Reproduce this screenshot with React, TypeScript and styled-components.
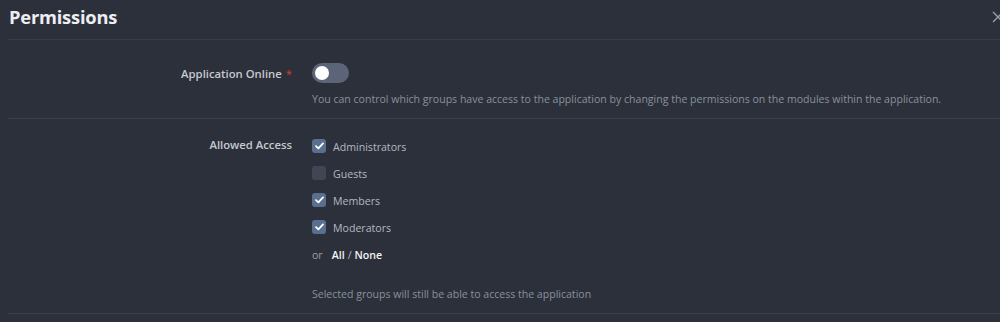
import React, { useState } from "react";
import styled, { createGlobalStyle } from "styled-components";

const GlobalStyle = createGlobalStyle`
  html, body {
    margin: 0;
    background: #2c303a;
  }
  body {
    font-family: "Open Sans", "Noto Sans", "Liberation Sans", sans-serif;
    -webkit-font-smoothing: antialiased;
  }
`;

const Panel = styled.div`
  width: 1000px;
  height: 322px;
  overflow: hidden;
  background: #2c303a;
  padding-left: 8px;
  box-sizing: border-box;
`;

const Header = styled.div`
  display: flex;
  align-items: center;
  justify-content: space-between;
  height: 39px;
  border-bottom: 1px solid #383c48;
`;

const Title = styled.h2`
  margin: 0 0 0 1px;
  font-size: 18.3px;
  font-weight: 700;
  color: #eceef2;
  letter-spacing: -0.2px;
  line-height: 1;
  padding-bottom: 4px;
`;

const Close = styled.button`
  border: 0;
  background: none;
  padding: 0;
  margin-right: -4px;
  margin-bottom: 6px;
  color: #9aa0ad;
  display: flex;
  cursor: pointer;
`;

const Row = styled.div<{ $pt: number; $pb: number }>`
  display: grid;
  grid-template-columns: 284px 1fr;
  column-gap: 20px;
  padding: ${(p) => p.$pt}px 0 ${(p) => p.$pb}px;
  border-bottom: 1px solid #3a3e4a;
`;

const Label = styled.div<{ $mt: number }>`
  text-align: right;
  font-size: 11.3px;
  font-weight: 600;
  color: #c5c8cf;
  margin-top: ${(p) => p.$mt}px;
  line-height: 16px;
`;

const Required = styled.span`
  color: #c0392b;
  margin-left: 4px;
`;

const Field = styled.div`
  display: flex;
  flex-direction: column;
  align-items: flex-start;
`;

const Track = styled.button<{ $on: boolean }>`
  position: relative;
  width: 37px;
  height: 20px;
  border: 0;
  padding: 0;
  border-radius: 10px;
  background: ${(p) => (p.$on ? "#5b7bb0" : "#5c6478")};
  cursor: pointer;
`;

const Knob = styled.span<{ $on: boolean }>`
  position: absolute;
  top: 3px;
  left: ${(p) => (p.$on ? "20px" : "3px")};
  width: 14px;
  height: 14px;
  border-radius: 50%;
  background: #ffffff;
`;

const Help = styled.div<{ $mt: number }>`
  margin-top: ${(p) => p.$mt}px;
  font-size: 10.55px;
  color: #8a909c;
  line-height: 16px;
`;

const CheckList = styled.div`
  display: flex;
  flex-direction: column;
  gap: 11px;
`;

const CheckRow = styled.label`
  display: flex;
  align-items: center;
  gap: 7px;
  font-size: 10.6px;
  color: #b4b8c1;
  line-height: 16px;
  cursor: pointer;
`;

const Box = styled.span<{ $checked: boolean }>`
  width: 14px;
  height: 14px;
  border-radius: 3px;
  background: ${(p) => (p.$checked ? "#5a6f8f" : "#424654")};
  display: flex;
  align-items: center;
  justify-content: center;
  margin-top: -2px;
`;

const Toggles = styled.div`
  display: flex;
  align-items: center;
  gap: 9px;
  font-size: 10.6px;
  line-height: 16px;
  color: #9aa0ab;
  margin-top: 11px;
`;

const LinkText = styled.span`
  color: #f2f3f5;
  font-weight: 600;
`;

const Slash = styled.span`
  color: #b8bcc5;
  font-weight: 400;
  margin: 0 3px;
`;

const groups = [
  { name: "Administrators", checked: true },
  { name: "Guests", checked: false },
  { name: "Members", checked: true },
  { name: "Moderators", checked: true },
];

const Check = () => (
  <svg width="9" height="8" viewBox="0 0 9 8">
    <path d="M1 4.2 L3.4 6.4 L8 1.4" fill="none" stroke="#fff" strokeWidth="1.8" strokeLinecap="round" strokeLinejoin="round" />
  </svg>
);

export default function App() {
  const [online, setOnline] = useState(false);
  return (
    <>
      <GlobalStyle />
      <Panel>
        <Header>
          <Title>Permissions</Title>
          <Close aria-label="Close">
            <svg width="12" height="12" viewBox="0 0 12 12">
              <path d="M1 1 L11 11 M11 1 L1 11" stroke="currentColor" strokeWidth="1.3" />
            </svg>
          </Close>
        </Header>

        <Row $pt={23} $pb={11}>
          <Label $mt={3}>
            Application Online<Required>*</Required>
          </Label>
          <Field>
            <Track $on={online} onClick={() => setOnline(!online)}>
              <Knob $on={online} />
            </Track>
            <Help $mt={8}>
              You can control which groups have access to the application by changing the permissions on the modules
              within the application.
            </Help>
          </Field>
        </Row>

        <Row $pt={20} $pb={11}>
          <Label $mt={-2}>Allowed Access</Label>
          <Field>
            <CheckList>
              {groups.map((g) => (
                <CheckRow key={g.name}>
                  <Box $checked={g.checked}>{g.checked && <Check />}</Box>
                  {g.name}
                </CheckRow>
              ))}
            </CheckList>
            <Toggles>
              <span>or</span>
              <span>
                <LinkText>All</LinkText>
                <Slash>/</Slash>
                <LinkText>None</LinkText>
              </span>
            </Toggles>
            <Help $mt={23}>Selected groups will still be able to access the application</Help>
          </Field>
        </Row>
      </Panel>
    </>
  );
}
